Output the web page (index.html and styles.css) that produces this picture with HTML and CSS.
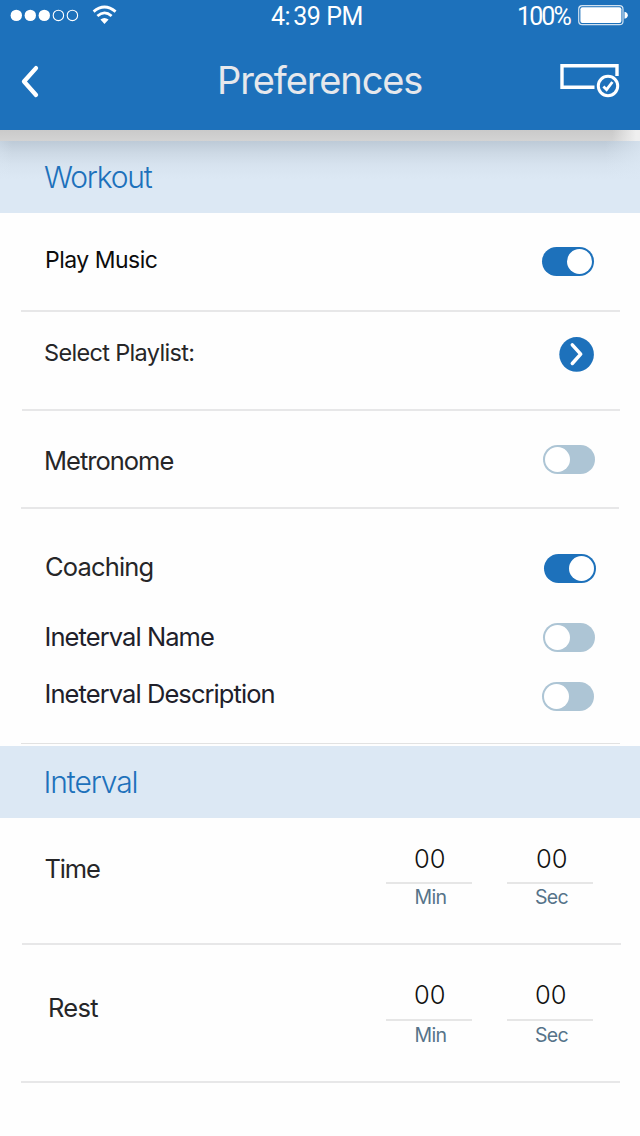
FILE: index.html
```html
<!DOCTYPE html>
<html lang="en">
<head>
<meta charset="utf-8">
<title>Preferences</title>
<link rel="stylesheet" href="styles.css">
</head>
<body>
<div class="screen">
  <header class="header">
    <div class="status">
      <svg class="signal" width="120" height="30" viewBox="0 0 120 30">
        <g fill="#fff"><circle cx="16.3" cy="15.4" r="5.7"/><circle cx="30.3" cy="15.4" r="5.7"/><circle cx="44.3" cy="15.4" r="5.7"/></g>
        <g fill="none" stroke="#fff" stroke-width="1.1"><circle cx="58.4" cy="15.4" r="5.2"/><circle cx="72.4" cy="15.4" r="5.2"/></g>
        <g fill="none" stroke="#fff" stroke-width="2.8"><path d="M93.6 11.6Q104.4 2.4 115.6 11.6"/><path d="M97.4 16Q104.4 9.8 111.6 16"/></g>
        <path d="M100.4 19.6Q104.4 16.2 108.6 19.6L104.5 24Z" fill="#fff"/>
      </svg>
      <span class="clock">4:<span class="clock-min">39 PM</span></span>
      <span class="percent">100%</span>
      <svg class="battery" width="52" height="22" viewBox="0 0 52 22">
        <rect x=".7" y=".7" width="44.3" height="19" rx="3.5" fill="none" stroke="#fff" stroke-opacity=".8" stroke-width="1.2"/>
        <rect x="2.4" y="2.3" width="41" height="15.8" rx="2" fill="#fff"/>
        <path d="M46.5 6.8q3.3.8 3.3 3.5t-3.3 3.5z" fill="#fff"/>
      </svg>
    </div>
    <div class="navbar">
      <svg class="back" width="24" height="36" viewBox="0 0 24 36"><path d="M18 4.1L6 17.5L18 31" fill="none" stroke="#fff" stroke-width="4.3" stroke-linecap="round" stroke-linejoin="round"/></svg>
      <h1 class="title">Preferences</h1>
      <svg class="save" width="62" height="36" viewBox="0 0 62 36">
        <path d="M34.5 25.2H2V3.8H57V14" fill="none" stroke="#fff" stroke-width="3.4"/>
        <circle cx="48" cy="24" r="9.7" fill="none" stroke="#fff" stroke-width="3"/>
        <path d="M43.4 24.5L46.6 27.7L52.4 20" fill="none" stroke="#fff" stroke-width="2.8"/>
      </svg>
    </div>
  </header>
  <div class="shade"></div>
  <h2 class="section section-first"><span class="workout">Workout</span></h2>
  <div class="row music"><span class="label">Play Music</span><span class="toggle on"></span></div>
  <div class="row playlist"><span class="label">Select Playlist:</span>
    <svg class="go" width="35" height="35" viewBox="0 0 35 35"><circle cx="17.6" cy="17.4" r="17.3" fill="#1d71bb"/><path d="M13.3 7.8L21.7 17.2L13.3 26.5" fill="none" stroke="#fff" stroke-width="3.5" stroke-linecap="round" stroke-linejoin="round"/></svg>
  </div>
  <div class="row metronome"><span class="label">Metronome</span><span class="toggle"></span></div>
  <div class="group">
    <div class="row coaching"><span class="label">Coaching</span><span class="toggle on"></span></div>
    <div class="row name"><span class="label">Ineterval Name</span><span class="toggle"></span></div>
    <div class="row description"><span class="label">Ineterval Description</span><span class="toggle"></span></div>
  </div>
  <h2 class="section"><span class="interval">Interval</span></h2>
  <div class="row time"><span class="label">Time</span>
    <div class="fields">
      <div class="field"><span class="value">00</span><span class="unit min">Min</span></div>
      <div class="field"><span class="value value-right">00</span><span class="unit sec">Sec</span></div>
    </div>
  </div>
  <div class="row rest"><span class="label">Rest</span>
    <div class="fields">
      <div class="field"><span class="value">00</span><span class="unit min">Min</span></div>
      <div class="field"><span class="value">00</span><span class="unit sec">Sec</span></div>
    </div>
  </div>
</div>
</body>
</html>
```
FILE: styles.css
```css
* { box-sizing: border-box; }
body { margin: 0; background: #fff; font-family: Inter, "Liberation Sans", sans-serif; font-weight: 400; color: #262628; }
svg { display: block; flex: none; }
.screen { width: 640px; height: 1136px; overflow: hidden; background: #fefefe; }
.header { height: 130px; background: #1d71bb; }
.status { display: flex; height: 32px; color: #fff; font: 400 25px/33px Roboto, sans-serif; }
.clock { width: 246px; margin-left: 151px; letter-spacing: -.45px; white-space: nowrap; }
.clock-min { margin-left: 3px; }
.percent { width: 61px; letter-spacing: -1.9px; }
.battery { margin-top: 5px; }
.navbar { display: flex; height: 98px; padding: 32px 18px 0; }
.title { width: 342px; margin: -2px 0 0 175px; font-size: 38px; line-height: 36px; font-weight: 400; letter-spacing: -1.1px; color: #e6e8ec; }
.save { margin: -2px 0 0 1px; }
.shade { height: 11px; background: linear-gradient(90deg, rgba(240,240,240,0) 612px, #efefef 636px), linear-gradient(#cacaca, #d3d3d3); }
.section { display: flex; align-items: center; height: 72px; margin: 0; padding: 0 44px; background: #dce8f4; color: #1d71bb; font-size: 30px; font-weight: 300; line-height: 36px; }
.section-first { background: linear-gradient(90deg, rgba(220,232,244,.3), rgba(220,232,244,0) 12px, rgba(220,232,244,0) 605px, rgba(220,232,244,.7) 640px), linear-gradient(#bdcad7, #cdd9e5 12px, #d7e3ef 24px, #dce8f4 38px); }
.workout { letter-spacing: -1.2px; }
.interval { margin-left: -.5px; letter-spacing: -1.1px; }
.row { display: flex; align-items: flex-start; justify-content: space-between; background: linear-gradient(#e7e7e8, #e7e7e8) 21px 100% / 599px 2px no-repeat; padding: 0 46px 0 44px; }
.label { font-size: 25.5px; line-height: 32px; letter-spacing: -1px; white-space: nowrap; }
.toggle { width: 52px; height: 29px; padding: 2px; border-radius: 15px; background: #adc5d5; }
.toggle::before { content: ""; display: block; width: 25px; height: 25px; border-radius: 50%; background: #fff; }
.toggle.on { background: #1d71bb; }
.toggle.on::before { margin-left: auto; }
.music { height: 99px; padding-top: 31px; color: #0c0c0c; }
.music .label { margin-left: 1px; font-size: 23px; letter-spacing: -.5px; }
.music .toggle { margin-top: 3px; }
.playlist { height: 99px; padding-top: 25px; background-position: 22px 100%; background-size: 598px 2px; }
.playlist .label { font-size: 23.5px; letter-spacing: -.67px; }
.metronome { height: 98px; padding: 34px 45px 0 44px; background-size: 598px 2px; }
.group { height: 237px; padding-top: 42px; background: linear-gradient(#e2e2e2, #e2e2e2) 21px 234px / 599px 1px no-repeat; }
.group .row { background: none; }
.coaching { height: 70px; padding-right: 44px; }
.coaching .label { margin-left: 1px; letter-spacing: -.85px; }
.coaching .toggle { margin-top: 3px; }
.name { height: 57px; padding-right: 45px; color: #20202a; }
.name .label, .description .label { margin-left: .5px; letter-spacing: -.92px; }
.name .toggle { margin-top: 2px; }
.description { color: #20202a; }
.description .toggle { margin-top: 4px; }
.time { height: 127px; padding: 25px 47px 0 44px; background-position: 22px 100%; }
.time .label { margin: 10px 0 0 .5px; letter-spacing: -1.15px; }
.rest { height: 138px; padding: 34px 47px 0 48px; }
.rest .label { margin-top: 13px; letter-spacing: -.7px; }
.fields { display: flex; gap: 35px; }
.field { display: flex; flex-direction: column; width: 86px; }
.value { height: 41px; border-bottom: 2px solid #e6e6e6; padding-left: 28px; font-size: 25.5px; font-weight: 300; line-height: 32px; letter-spacing: -.1px; color: #111; }
.rest .value { height: 42px; }
.time .value-right { padding-left: 29px; }
.unit { font-size: 19.5px; line-height: 26px; padding-left: 28px; color: #567389; letter-spacing: -.65px; }
.min { padding-left: 28.5px; }
.rest .unit { line-height: 29px; }
```
